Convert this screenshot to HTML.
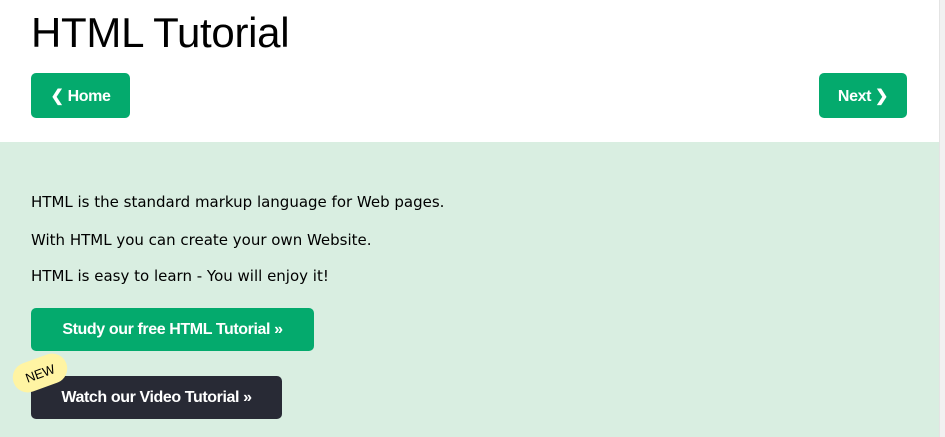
<!DOCTYPE html><html><head><style>
body{margin:0;width:945px;height:437px;overflow:hidden;background:#fff;font-family:"Liberation Sans",sans-serif;position:relative}
.edge{position:absolute;left:939px;top:0;width:6px;height:437px;background:#f1f1f1;border-left:1px solid #e4e4e4}
h1{position:absolute;left:31px;top:9px;margin:0;font-weight:400;font-size:42px;color:#000;letter-spacing:-0.3px}
.btn{position:absolute;background:#04aa6d;color:#fff;font-weight:bold;font-size:16px;letter-spacing:-0.4px;border-radius:5px;display:flex;align-items:center;justify-content:center}
.panel{position:absolute;left:0;top:142px;width:939px;height:295px;background:#d9eee1}
p{position:absolute;left:31px;margin:0;font-family:"DejaVu Sans",sans-serif;font-size:15px;color:#000}
.new{position:absolute;left:12px;top:358px;width:56px;height:30px;background:#fff4a3;border-radius:15px;transform:rotate(-20deg);font-size:13px;display:flex;align-items:center;justify-content:center;color:#000;z-index:2}
</style></head><body>
<div class="edge"></div>
<h1>HTML Tutorial</h1>
<div class="btn" style="left:31px;top:73px;width:99px;height:45px">❮ Home</div>
<div class="btn" style="left:819px;top:73px;width:88px;height:45px">Next ❯</div>
<div class="panel"></div>
<p style="top:193px">HTML is the standard markup language for Web pages.</p>
<p style="top:231px">With HTML you can create your own Website.</p>
<p style="top:267px">HTML is easy to learn - You will enjoy it!</p>
<div class="btn" style="left:31px;top:308px;width:283px;height:43px">Study our free HTML Tutorial »</div>
<div class="btn" style="left:31px;top:376px;width:251px;height:43px;background:#282a35">Watch our Video Tutorial »</div>
<div class="new">NEW</div>
</body></html>
